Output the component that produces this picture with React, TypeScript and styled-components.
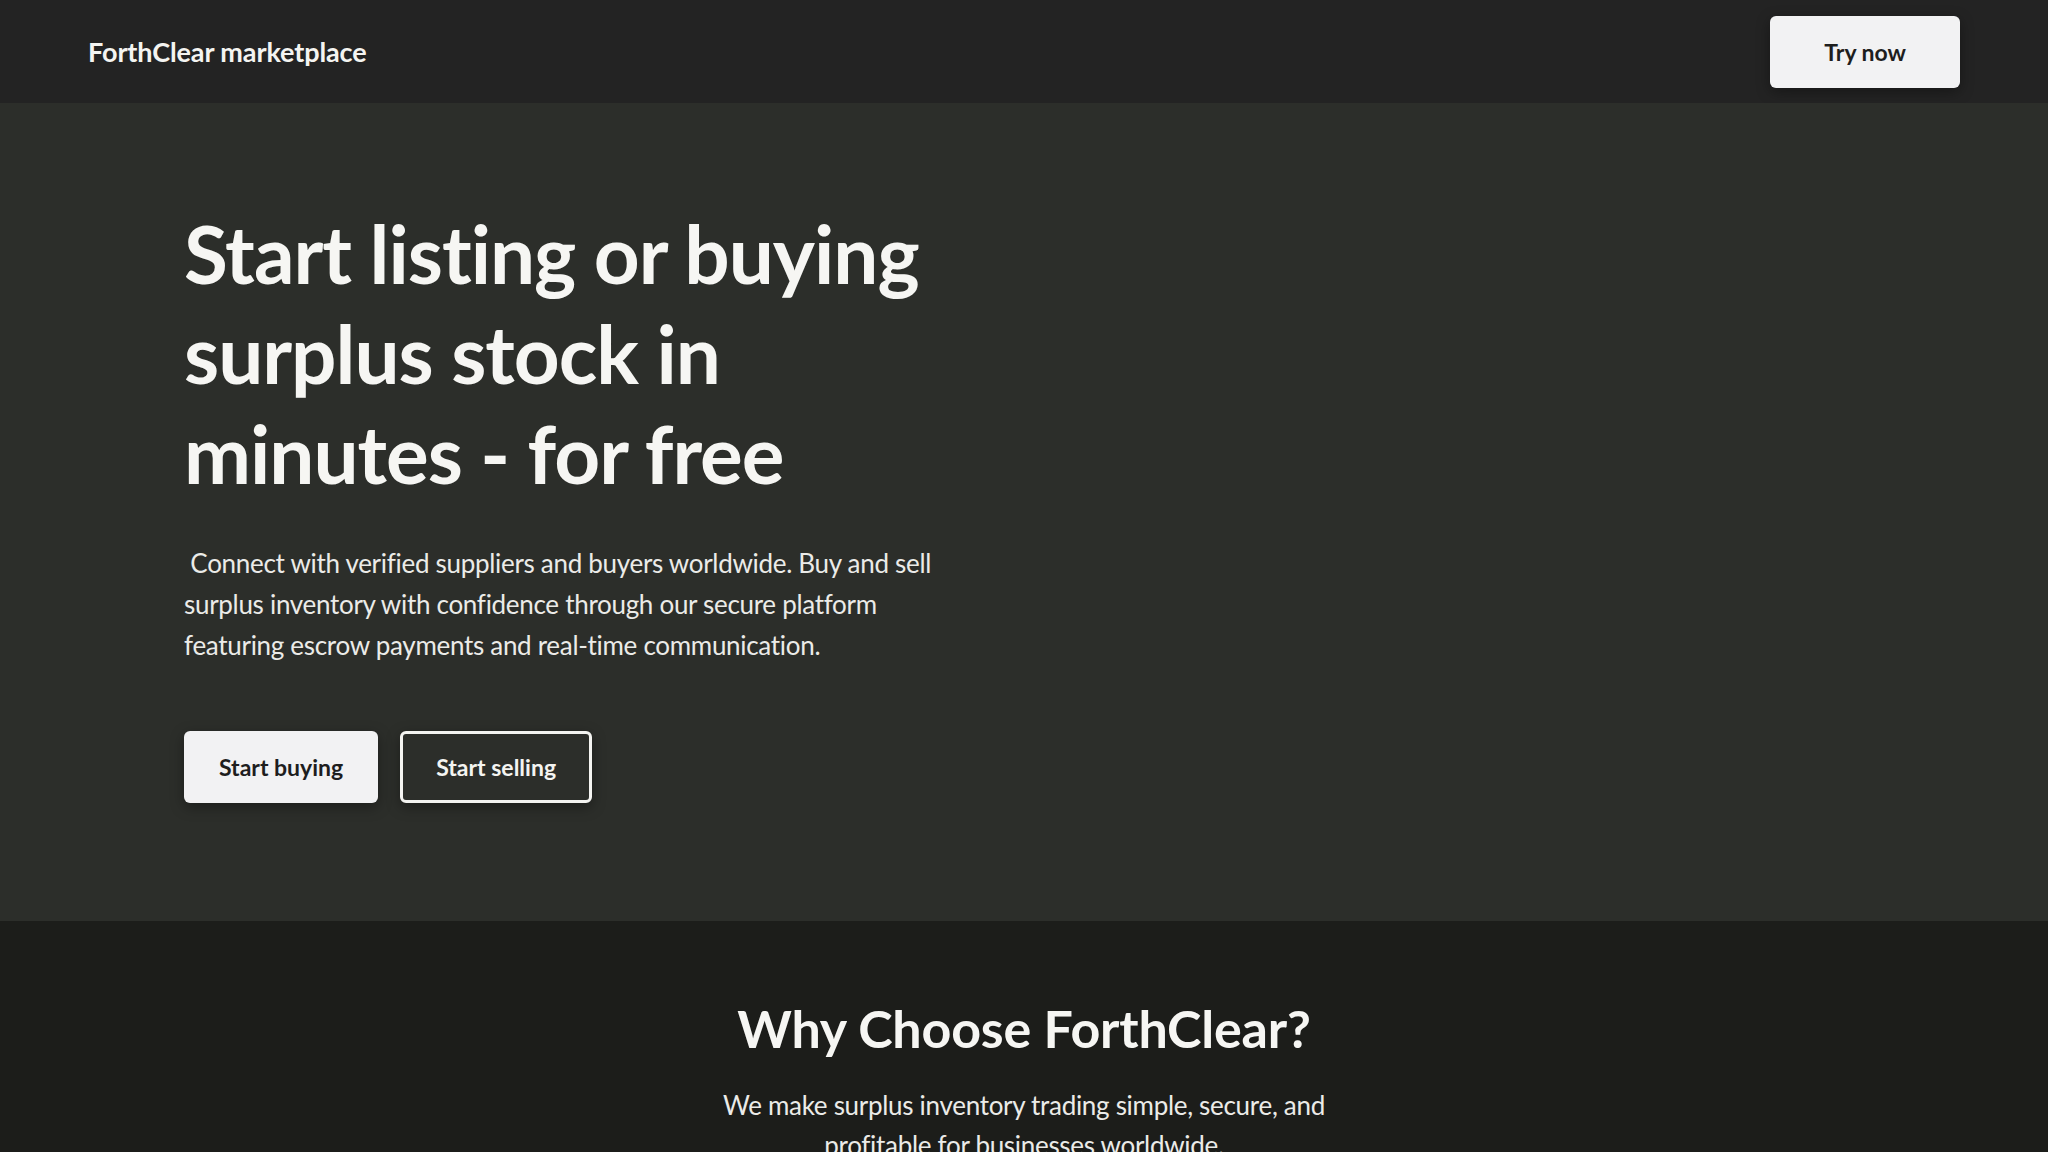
import React from "react";
import styled, { createGlobalStyle } from "styled-components";

const GlobalStyle = createGlobalStyle`
  * {
    box-sizing: border-box;
  }
  body {
    margin: 0;
    background: #1c1d1a;
    font-family: Lato, "Open Sans", sans-serif;
    color: #f4f4f1;
  }
`;

const Page = styled.div`
  width: 100%;
  min-height: 100vh;
  display: flex;
  flex-direction: column;
`;

const Header = styled.header`
  height: 103px;
  padding: 0 88px;
  background: #232323;
  display: flex;
  align-items: center;
  justify-content: space-between;
`;

const Brand = styled.div`
  font-size: 27px;
  font-weight: 700;
  letter-spacing: -0.1px;
  color: #f4f4f1;
`;

const Button = styled.button<{ $variant?: "solid" | "outline"; $pad?: number }>`
  height: 72px;
  padding: 0 ${(p) => p.$pad ?? (p.$variant === "outline" ? 33 : 35)}px;
  border-radius: 6px;
  font-family: Lato, "Open Sans", sans-serif;
  font-size: 23px;
  font-weight: 700;
  cursor: pointer;
  box-shadow: 0 4px 14px rgba(0, 0, 0, 0.35);
  background: ${(p) => (p.$variant === "outline" ? "#2c2e2a" : "#f2f2f3")};
  color: ${(p) => (p.$variant === "outline" ? "#f4f4f1" : "#1e1e1e")};
  border: ${(p) => (p.$variant === "outline" ? "3px solid #f4f4f1" : "none")};
`;

const Hero = styled.section`
  background: #2c2e2a;
  padding: 100px 184px 118px;
`;

const HeroInner = styled.div`
  max-width: 768px;
  display: flex;
  flex-direction: column;
`;

const Title = styled.h1`
  margin: 0;
  font-size: 80px;
  line-height: 1.25;
  font-weight: 700;
  letter-spacing: -1px;
  color: #f6f6f3;
`;

const Lead = styled.p`
  margin: 40px 0 0;
  font-size: 26px;
  line-height: 41px;
  letter-spacing: -0.3px;
  color: #ebebe8;
  white-space: pre-wrap;
`;

const Actions = styled.div`
  display: flex;
  gap: 22px;
  margin-top: 65px;
`;

const Why = styled.section`
  background: #1c1d1a;
  padding: 76px 0 80px;
  display: flex;
  flex-direction: column;
  align-items: center;
  text-align: center;
`;

const WhyTitle = styled.h2`
  margin: 0;
  font-size: 52px;
  line-height: 1.2;
  font-weight: 700;
  letter-spacing: -0.2px;
  color: #f6f6f3;
`;

const WhyText = styled.p`
  margin: 26px 0 0;
  max-width: 660px;
  font-size: 26px;
  line-height: 40px;
  letter-spacing: -0.3px;
  color: #ebebe8;
`;

export default function App() {
  return (
    <Page>
      <GlobalStyle />
      <Header>
        <Brand>ForthClear marketplace</Brand>
        <Button $pad={54}>Try now</Button>
      </Header>
      <Hero>
        <HeroInner>
          <Title>Start listing or buying surplus stock in minutes - for free</Title>
          <Lead>
            {" Connect with verified suppliers and buyers worldwide. Buy and sell surplus inventory with confidence through our secure platform featuring escrow payments and real-time communication."}
          </Lead>
          <Actions>
            <Button>Start buying</Button>
            <Button $variant="outline">Start selling</Button>
          </Actions>
        </HeroInner>
      </Hero>
      <Why>
        <WhyTitle>Why Choose ForthClear?</WhyTitle>
        <WhyText>
          We make surplus inventory trading simple, secure, and profitable for businesses worldwide.
        </WhyText>
      </Why>
    </Page>
  );
}
